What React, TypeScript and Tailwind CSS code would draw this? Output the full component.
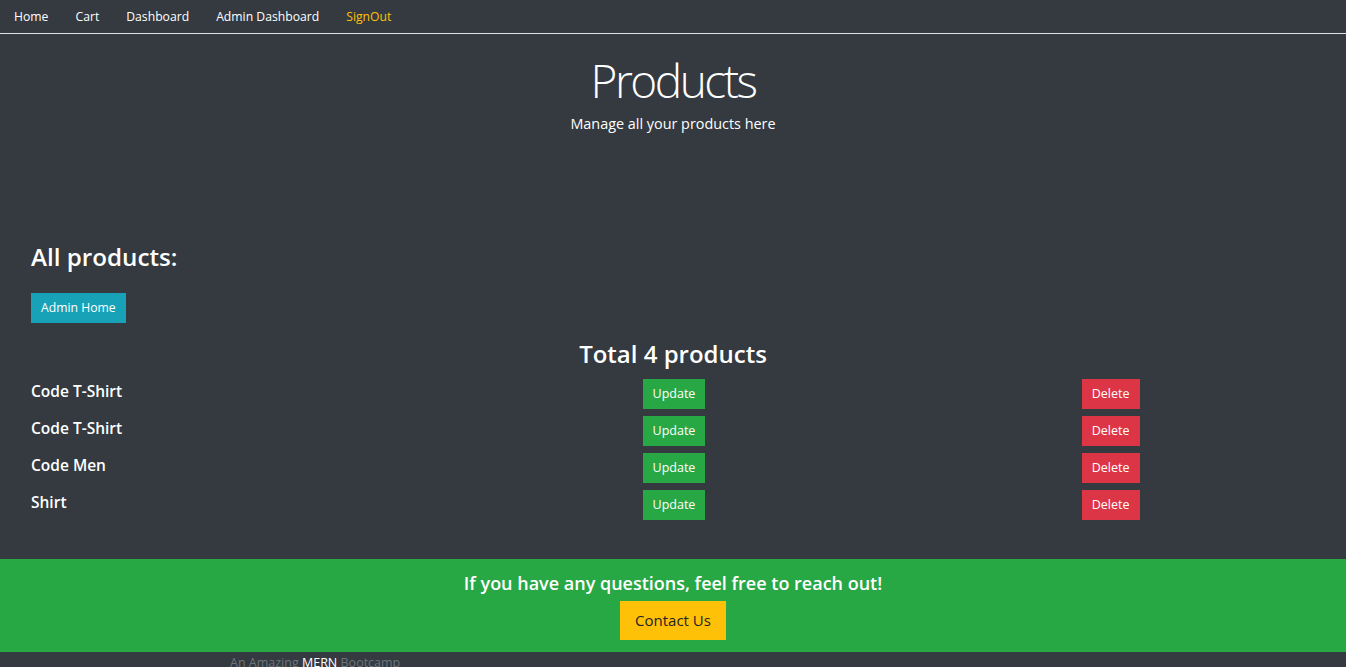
import React from "react";

const navLinks = [
  { label: "Home", active: false },
  { label: "Cart", active: false },
  { label: "Dashboard", active: false },
  { label: "Admin Dashboard", active: false },
  { label: "SignOut", active: true },
];

const products = [
  { id: "1", name: "Code T-Shirt" },
  { id: "2", name: "Code T-Shirt" },
  { id: "3", name: "Code Men" },
  { id: "4", name: "Shirt" },
];

function NavBar() {
  return (
    <ul className="flex h-[34px] items-center border-b border-[#dee2e6] bg-[#343a40] pl-[0.5px]">
      {navLinks.map((link) => (
        <li key={link.label}>
          <a
            href="#"
            className={`block px-[13.5px] text-[12.2px] leading-[33px] ${
              link.active ? "text-[#ffc107]" : "text-white"
            }`}
          >
            {link.label}
          </a>
        </li>
      ))}
    </ul>
  );
}

export default function App() {
  return (
    <div
      className="min-h-screen bg-[#343a40] text-white"
      style={{ fontFamily: '"Open Sans", "Noto Sans", sans-serif' }}
    >
      <NavBar />

      {/* jumbotron */}
      <div className="pt-[16px] text-center">
        <h1 className="text-[46px] font-light leading-[60px] tracking-[-2.5px]">Products</h1>
        <p className="mt-[2px] text-[14.4px] leading-[24px]">Manage all your products here</p>
      </div>

      <div className="pt-[105px]">
        <h2 className="px-[31px] text-[24.2px] font-semibold leading-[32px]">All products:</h2>
        <div className="px-[31px] pt-[20px]">
          <button className="h-[30px] bg-[#17a2b8] px-[10px] text-[12.2px] text-white">
            Admin Home
          </button>
        </div>

        <h2 className="pt-[15px] text-center text-[24px] font-semibold leading-[32px]">
          Total 4 products
        </h2>

        <div className="mx-[18px] pt-[9px]">
          {products.map((p) => (
            <div key={p.id} className="grid h-[37px] grid-cols-3 items-start">
              <div className="px-[13px] pt-[1px] text-[15.5px] font-semibold leading-[22px]">{p.name}</div>
              <div className="pl-[2px] text-center">
                <button className="h-[30px] bg-[#28a745] px-[10px] text-[12.5px] text-white">
                  Update
                </button>
              </div>
              <div className="pl-[2px] text-center">
                <button className="h-[30px] bg-[#dc3545] px-[10px] text-[12.5px] text-white">
                  Delete
                </button>
              </div>
            </div>
          ))}
        </div>
      </div>

      <footer className="mt-[32px]">
        <div className="flex h-[93px] flex-col items-center bg-[#28a745] pt-[10px]">
          <h4 className="text-[18px] font-semibold leading-[28px]">
            If you have any questions, feel free to reach out!
          </h4>
          <button className="mt-[4px] h-[39px] bg-[#ffc107] px-[15px] text-[15px] text-[#212529]">
            Contact Us
          </button>
        </div>
        <div className="pl-[230px] pt-[1px] text-[12.5px] leading-[20px] text-[#6c757d]">
          An Amazing <span className="text-white">MERN</span> Bootcamp
        </div>
      </footer>
    </div>
  );
}
